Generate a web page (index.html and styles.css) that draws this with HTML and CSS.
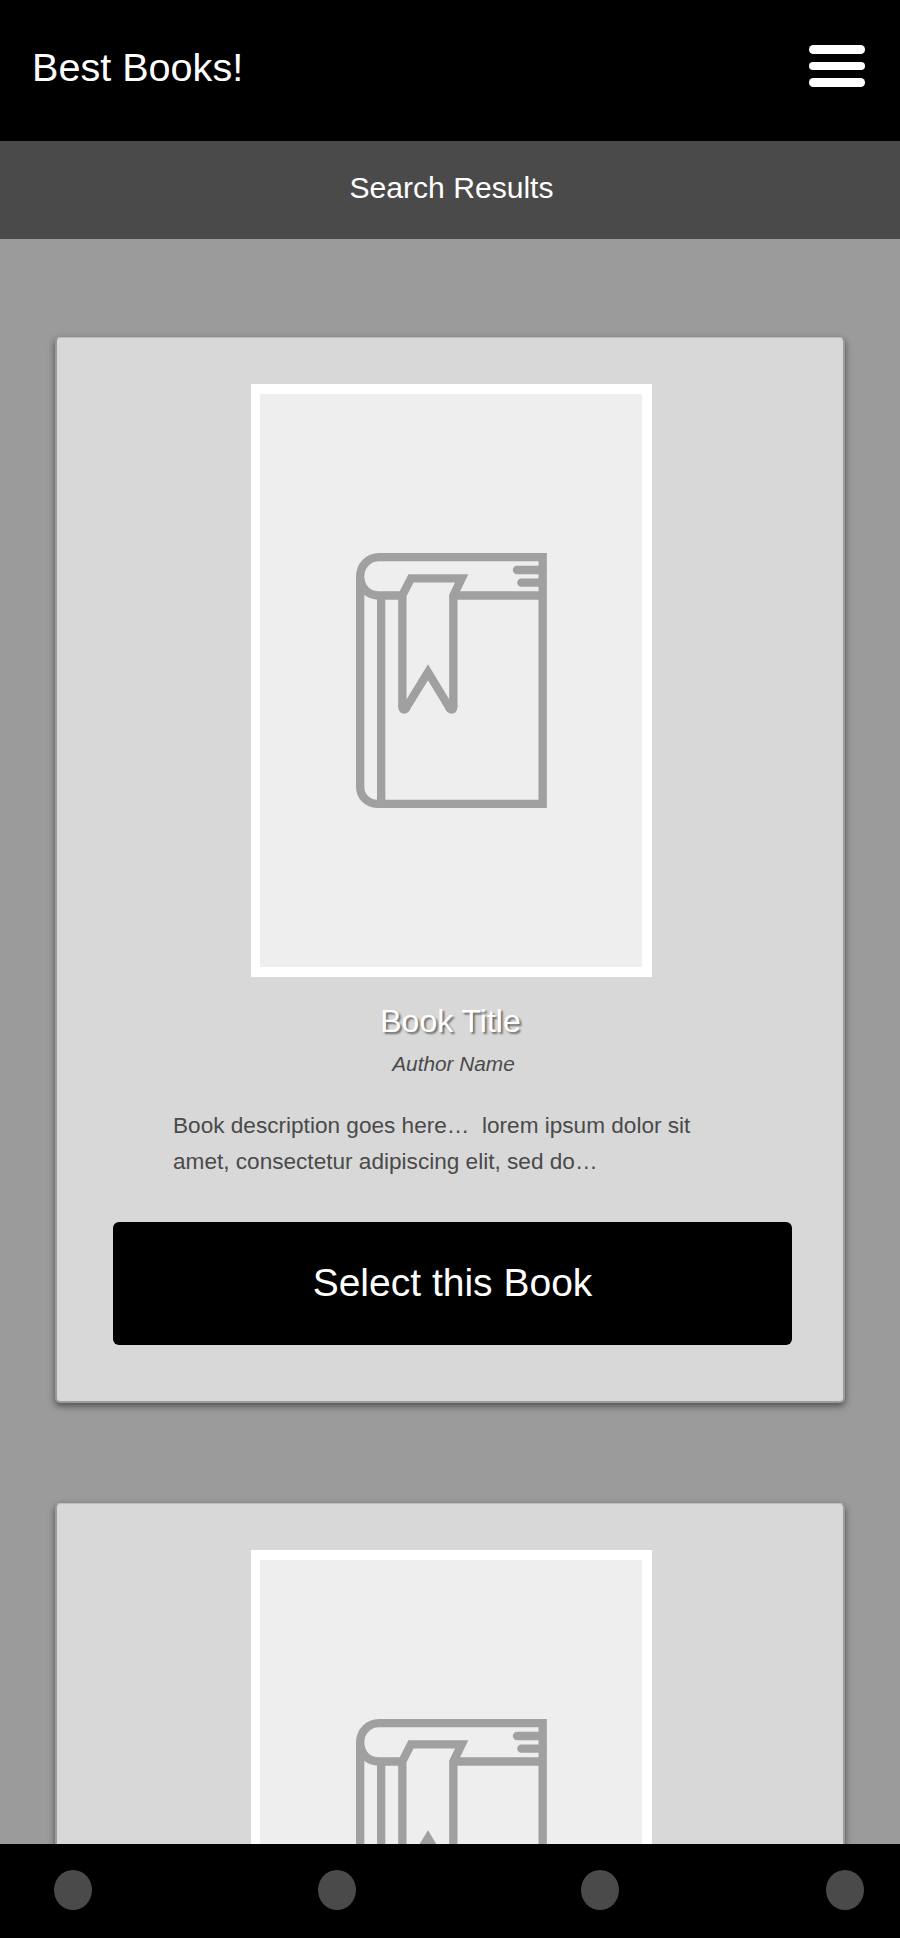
FILE: index.html
```html
<!DOCTYPE html>
<html lang="en">
<head>
<meta charset="utf-8">
<title>Best Books!</title>
<link rel="stylesheet" href="styles.css">
</head>
<body>
<header class="header">
  <h1 class="brand">Best Books!</h1>
  <button class="menu" aria-label="Menu"><span class="bar"></span><span class="bar"></span><span class="bar"></span></button>
</header>
<h2 class="subheader">Search Results</h2>
<main class="results">
  <svg width="0" height="0" class="defs">
    <symbol id="book" viewBox="47 40 573 765">
      <g fill="none" stroke="#a0a0a0" stroke-width="25">
        <path d="M188 167.500H117C80 167.500 59.500 141 59.500 110S83 52.500 117 52.500H607V792.500H110C82 792.500 59.500 770 59.500 742V110"/>
        <path d="M122.500 167.500V792.500M342 167.500H607"/>
        <path stroke-linecap="round" d="M530 91H607M543 129H607"/>
        <path d="M186 503V167L212 116H364L339 168V503"/>
        <path stroke-linejoin="miter" d="M196 507L263 398L329 507"/>
      </g>
      <path fill="#a0a0a0" d="M174 495H198L210 508Q204 522 192 522Q176 522 174 505ZM351 495H327L315 508Q321 522 334 522Q349 522 351 505Z"/>
    </symbol>
  </svg>
  <article class="card">
    <div class="cover"><svg class="book"><use href="#book"/></svg></div>
    <h3 class="title">Book Title</h3>
    <p class="author">Author Name</p>
    <p class="description">Book description goes here…&nbsp; lorem ipsum dolor sit<br>amet, consectetur adipiscing elit, sed do…</p>
    <button class="select">Select this Book</button>
  </article>
  <article class="card">
    <div class="cover"><svg class="book"><use href="#book"/></svg></div>
  </article>
</main>
<nav class="tabs">
  <span class="dot"></span><span class="dot"></span><span class="dot"></span><span class="dot last"></span>
</nav>
</body>
</html>
```
FILE: styles.css
```css
* { box-sizing: border-box; margin: 0; padding: 0; }
body {
  display: flex;
  flex-direction: column;
  width: 900px;
  height: 1938px;
  overflow: hidden;
  background: #9b9b9b;
  font-family: "Liberation Sans", Arial, sans-serif;
}
h1, h2, h3 { font-weight: 400; }
button { border: 0; font-family: inherit; }
.header {
  flex: none;
  display: flex;
  justify-content: space-between;
  align-items: flex-start;
  height: 141px;
  padding: 45px 35px 0 32px;
  background: #000;
  color: #fff;
}
.brand { font-size: 39.6px; line-height: 44px; }
.menu {
  display: flex;
  flex-direction: column;
  gap: 8px;
  width: 56px;
  background: none;
}
.bar { height: 8.600px; border-radius: 4.300px; background: #fff; }
.subheader {
  flex: none;
  height: 98px;
  padding-left: 3px;
  background: #4a4a4a;
  color: #fff;
  font-size: 30.1px;
  line-height: 93px;
  text-align: center;
}
.results {
  flex: 1;
  min-height: 0;
  display: flex;
  flex-direction: column;
  gap: 100px;
  padding: 98px 55px 0;
  overflow: hidden;
}
.defs { display: none; }
.card {
  flex: none;
  display: flex;
  flex-direction: column;
  height: 1066px;
  padding: 46px 52px 0 56px;
  border: 2px solid #9b9b9b;
  border-top: 1px solid #bdbdbd;
  border-radius: 5px;
  background: #d8d8d8;
  box-shadow: 0 3px 7px rgba(0, 0, 0, 0.5);
}
.cover {
  flex: none;
  align-self: flex-start;
  display: flex;
  width: 401px;
  height: 593px;
  margin-left: 138px;
  padding: 159px 0 0 96px;
  border: 10px solid #fff;
  border-left-width: 9px;
  background: #eee;
}
.book { width: 191px; height: 255px; }
.title {
  height: 40px;
  margin-top: 24px;
  padding-right: 3px;
  color: #fff;
  font-size: 32px;
  line-height: 40px;
  text-align: center;
  text-shadow: 2px 2px 2px rgba(0, 0, 0, 0.5);
}
.author {
  height: 28px;
  margin-top: 9px;
  padding-left: 3px;
  color: #4a4a4a;
  font-size: 20.8px;
  font-style: italic;
  line-height: 28px;
  text-align: center;
}
.description {
  margin: 30px 0 0 60px;
  color: #4a4a4a;
  font-size: 22.6px;
  line-height: 35.8px;
  white-space: nowrap;
}
.select {
  width: 679px;
  height: 123px;
  margin-top: 42px;
  border-radius: 6px;
  background: #000;
  color: #fff;
  font-size: 39px;
}
.tabs {
  flex: none;
  display: flex;
  gap: 225.5px;
  height: 94px;
  padding: 26px 0 0 54.400px;
  background: #000;
}
.dot { width: 38px; height: 40px; border-radius: 50%; background: #4a4a4a; }
.last { margin-left: -19px; }
```
